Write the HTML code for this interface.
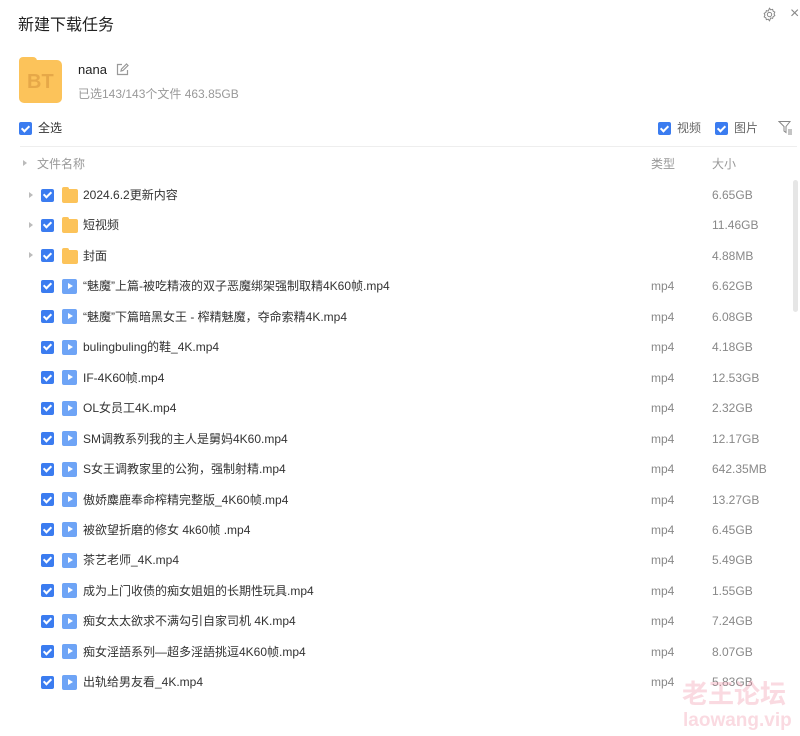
<!DOCTYPE html>
<html><head><meta charset="utf-8"><style>
*{margin:0;padding:0;box-sizing:border-box}
body{width:800px;height:736px;background:#fff;font-family:"Liberation Sans","Noto Sans CJK SC",sans-serif;color:#333;position:relative;overflow:hidden;font-size:12px;line-height:16px}
.a{position:absolute;white-space:nowrap;line-height:16px}
.cb{position:absolute;width:13px;height:13px;background:#3b7cf0;border-radius:2px}
.cb:after{content:"";position:absolute;left:4px;top:1.5px;width:3px;height:6px;border:solid #fff;border-width:0 2px 2px 0;transform:rotate(45deg)}
.fd{position:absolute;width:16px;height:14px;background:#fcc35a;border-radius:2px}
.fd:before{content:"";position:absolute;left:0;top:-2px;width:7px;height:4px;background:#fcc35a;border-radius:2px 2px 0 0}
.pl{position:absolute;width:15px;height:15px;background:#6ea4f6;border-radius:2px}
.pl:after{content:"";position:absolute;left:5.5px;top:4px;border-left:5px solid #fff;border-top:3.5px solid transparent;border-bottom:3.5px solid transparent}
.tri{position:absolute;border-left:4px solid #bbb;border-top:3.5px solid transparent;border-bottom:3.5px solid transparent}
.g{color:#999}
.sz{color:#888}
</style></head><body>
<div class="a" style="left:18px;top:16px;font-size:16px;line-height:20px;color:#222">新建下载任务</div>
<svg class="a" style="left:762px;top:7px" width="15" height="15" viewBox="0 0 24 24" fill="none" stroke="#888" stroke-width="1.6"><path d="M12 2l2 2.5 3-.8.8 3 2.7 1.5-1.2 2.8 1.2 2.8-2.7 1.5-.8 3-3-.8L12 22l-2-2.5-3 .8-.8-3-2.7-1.5 1.2-2.8-1.2-2.8 2.7-1.5.8-3 3 .8z"/><circle cx="12" cy="12" r="3.5"/></svg>
<div class="a" style="left:790px;top:6px;font-size:16px;color:#888">×</div>
<div class="a" style="left:19px;top:60px;width:43px;height:43px;background:#fcc35a;border-radius:5px"></div>
<div class="a" style="left:19px;top:57px;width:18px;height:8px;background:#fcc35a;border-radius:4px 4px 0 0"></div>
<div class="a" style="left:27px;top:71px;font-size:20px;line-height:22px;font-weight:bold;color:#e6a848">BT</div>
<div class="a" style="left:78px;top:62px;font-size:13px;color:#222">nana</div>
<svg class="a" style="left:116px;top:63px" width="13" height="13" viewBox="0 0 13 13" fill="none" stroke="#999" stroke-width="1.2"><path d="M6 1.5H1.5v10h10V7"/><path d="M5 8l.5-2 5-5 1.5 1.5-5 5z"/></svg>
<div class="a g" style="left:78px;top:86px">已选143/143个文件 463.85GB</div>
<div class="cb" style="left:19px;top:122px"></div>
<div class="a" style="left:38px;top:120px;color:#333">全选</div>
<div class="cb" style="left:658px;top:122px"></div>
<div class="a" style="left:677px;top:120px;color:#666">视频</div>
<div class="cb" style="left:715px;top:122px"></div>
<div class="a" style="left:734px;top:120px;color:#666">图片</div>
<svg class="a" style="left:778px;top:120px" width="15" height="15" viewBox="0 0 15 15" fill="none" stroke="#888" stroke-width="1"><path d="M1 1.5h11L8 6.5v6l-2-1.5V6.5z"/><path d="M10 10h4M10 12h4M10 14h4"/></svg>
<div class="a" style="left:20px;top:146px;width:777px;height:1px;background:#eee"></div>
<div class="tri" style="left:23px;top:160px"></div>
<div class="a g" style="left:37px;top:156px">文件名称</div>
<div class="a g" style="left:651px;top:156px">类型</div>
<div class="a g" style="left:712px;top:156px">大小</div>
<div class="a" style="left:793px;top:180px;width:5px;height:132px;background:#e6e6e6;border-radius:3px"></div>
<div id="rows"></div>
<div class="a" style="left:682px;top:680px;font-size:26px;line-height:28px;font-weight:bold;color:rgba(240,150,170,.35)">老王论坛</div>
<div class="a" style="left:683px;top:711px;font-size:19px;line-height:20px;font-weight:bold;color:rgba(240,150,170,.35)">laowang.vip</div>
<script>
var d=[["f","2024.6.2更新内容","","6.65GB"],["f","短视频","","11.46GB"],["f","封面","","4.88MB"],
["v","“魅魔”上篇-被吃精液的双子恶魔绑架强制取精4K60帧.mp4","mp4","6.62GB"],
["v","“魅魔”下篇暗黑女王 - 榨精魅魔，夺命索精4K.mp4","mp4","6.08GB"],
["v","bulingbuling的鞋_4K.mp4","mp4","4.18GB"],["v","IF-4K60帧.mp4","mp4","12.53GB"],
["v","OL女员工4K.mp4","mp4","2.32GB"],["v","SM调教系列我的主人是舅妈4K60.mp4","mp4","12.17GB"],
["v","S女王调教家里的公狗，强制射精.mp4","mp4","642.35MB"],["v","傲娇麋鹿奉命榨精完整版_4K60帧.mp4","mp4","13.27GB"],
["v","被欲望折磨的修女 4k60帧 .mp4","mp4","6.45GB"],["v","茶艺老师_4K.mp4","mp4","5.49GB"],
["v","成为上门收债的痴女姐姐的长期性玩具.mp4","mp4","1.55GB"],["v","痴女太太欲求不满勾引自家司机 4K.mp4","mp4","7.24GB"],
["v","痴女淫語系列—超多淫語挑逗4K60帧.mp4","mp4","8.07GB"],["v","出轨给男友看_4K.mp4","mp4","5.83GB"]];
var h="";d.forEach(function(r,i){var c=195+i*30.45;
if(r[0]=="f"){h+='<div class="tri" style="left:29px;top:'+(c-3.5)+'px"></div><div class="fd" style="left:62px;top:'+(c-6)+'px"></div>';}
else h+='<div class="pl" style="left:62px;top:'+(c-7.5)+'px"></div>';
h+='<div class="cb" style="left:41px;top:'+(c-6.5)+'px"></div><div class="a" style="left:83px;top:'+(c-8)+'px">'+r[1]+'</div>';
if(r[2])h+='<div class="a sz" style="left:651px;top:'+(c-8)+'px">'+r[2]+'</div>';
h+='<div class="a sz" style="left:712px;top:'+(c-8)+'px">'+r[3]+'</div>';});
document.getElementById("rows").innerHTML=h;
</script>
</body></html>
